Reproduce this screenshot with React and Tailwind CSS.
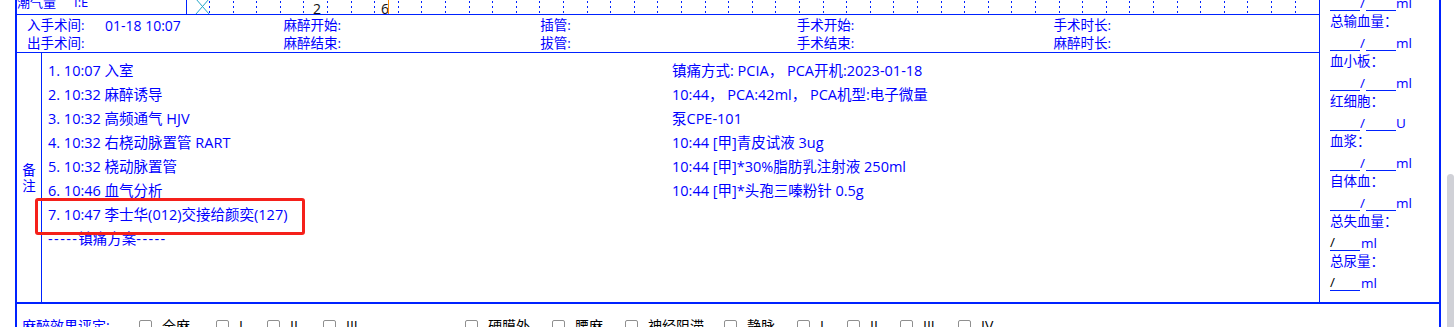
const LINE = 'border-[#0022ff]';

function BloodRow({ unit = 'ml' }) {
  return (
    <div className="flex h-[20px] items-end leading-[16px]">
      <span className="h-full w-[30px] border-b border-[#0022ff]" />
      <span className="w-[6px]">/</span>
      <span className="h-full w-[30px] border-b border-[#0022ff]" />
      <span>{unit}</span>
    </div>
  );
}

function TotalRow() {
  return (
    <div className="flex h-[20px] items-end leading-[16px]">
      <span className="flex h-full w-[30px] items-end border-b border-[#0022ff] text-black">/</span>
      <span className="ml-[1px]">ml</span>
    </div>
  );
}

function Label({ children }) {
  return <div className="flex h-[20px] items-center leading-[16px]">{children}</div>;
}

function Check({ label, w }) {
  return (
    <div className={`flex items-center ${w}`}>
      <span className="mr-[10px] h-[13px] w-[13px] shrink-0 rounded-[2px] border border-[#8f8f8f] bg-white" />
      <span className="text-black">{label}</span>
    </div>
  );
}

export default function App() {
  const ticks = Array.from({ length: 47 }, (_, i) => 22.5 + Math.round(i * 23.6));
  const time = [
    ['入手术间:', '01-18 10:07'],
    ['麻醉开始:', ''],
    ['插管:', ''],
    ['手术开始:', ''],
    ['手术时长:', ''],
    ['出手术间:', ''],
    ['麻醉结束:', ''],
    ['拔管:', ''],
    ['手术结束:', ''],
    ['麻醉时长:', ''],
  ];
  const items = [
    '1. 10:07 入室',
    '2. 10:32 麻醉诱导',
    '3. 10:32 高频通气 HJV',
    '4. 10:32 右桡动脉置管 RART',
    '5. 10:32 桡动脉置管',
    '6. 10:46 血气分析',
    '7. 10:47 李士华(012)交接给颜奕(127)',
  ];
  const pain = [
    '镇痛方式: PCIA， PCA开机:2023-01-18',
    '10:44， PCA:42ml， PCA机型:电子微量',
    '泵CPE-101',
    '10:44 [甲]青皮试液 3ug',
    '10:44 [甲]*30%脂肪乳注射液 250ml',
    '10:44 [甲]*头孢三嗪粉针 0.5g',
  ];
  return (
    <div className="relative h-[327px] w-[1454px] overflow-hidden bg-white font-['Open_Sans','Noto_Sans_CJK_SC',sans-serif] text-[#0000ff]">
      <div className={`-mt-[9px] ml-[15px] w-[1426px] border-x-2 ${LINE}`}>
        <div className="flex">
          <div className="flex w-[1302px] flex-col">
            {/* chart row */}
            <div className={`flex h-[24px] border-b ${LINE}`}>
              <div className={`flex w-[170px] items-center border-r ${LINE} text-[13px] leading-none`}>
                <span>潮气量</span>
                <span className="ml-[18px]">I:E</span>
              </div>
              <svg width="1132" height="23" className="block shrink-0">
                {ticks.map((x) => (
                  <line key={x} x1={x} y1="0" x2={x} y2="23" stroke="#0022ff" strokeWidth="1" strokeDasharray="2 3" />
                ))}
                <line x1="9" y1="8" x2="22" y2="23" stroke="#22a6c8" strokeWidth="1" />
                <line x1="22" y1="8" x2="9" y2="23" stroke="#22a6c8" strokeWidth="1" />
                <text x="126" y="22.5" fontSize="14" fill="#111" fontFamily="Open Sans, sans-serif">2</text>
                <text x="194" y="22.5" fontSize="14" fill="#111" fontFamily="Open Sans, sans-serif">6</text>
                <line x1="201.5" y1="0" x2="201.5" y2="23" stroke="#ff8a00" strokeWidth="1" />
              </svg>
            </div>
            {/* time section */}
            <div className={`grid h-[38px] grid-cols-5 border-b ${LINE} pl-[10px] pr-[9px] pt-[2px] text-[13.5px] leading-[17px]`}>
              {time.map(([l, v]) => (
                <div key={l} className="flex whitespace-nowrap">
                  <span className="w-[78px]">{l}</span>
                  <span className="text-[14px]">{v}</span>
                </div>
              ))}
            </div>
            {/* notes */}
            <div className="flex h-[249px]">
              <div className={`flex w-[25px] items-center justify-center border-r ${LINE} text-[13.5px] leading-[16px]`}>
                <div className="text-center">备<br />注</div>
              </div>
              <div className="flex pl-[6px] pt-[6px] text-[14.5px] leading-[24px]">
                <div className="w-[624px] whitespace-nowrap">
                  {items.map((t) => (
                    <div key={t}>{t}</div>
                  ))}
                  <div>
                    <span className="tracking-[1.4px]">-----</span>镇痛方案<span className="tracking-[1.4px]">-----</span>
                  </div>
                </div>
                <div className="whitespace-nowrap">
                  {pain.map((t) => (
                    <div key={t}>{t}</div>
                  ))}
                </div>
              </div>
            </div>
          </div>
          {/* right column */}
          <div className={`w-[120px] border-l ${LINE} pl-[10px] text-[13.5px]`}>
            <BloodRow />
            <Label>总输血量：</Label>
            <BloodRow />
            <Label>血小板：</Label>
            <BloodRow />
            <Label>红细胞：</Label>
            <BloodRow unit="U" />
            <Label>血浆：</Label>
            <BloodRow />
            <Label>自体血：</Label>
            <BloodRow />
            <Label>总失血量：</Label>
            <TotalRow />
            <Label>总尿量：</Label>
            <TotalRow />
          </div>
        </div>
        {/* bottom row */}
        <div className={`flex h-[40px] items-start border-t-2 ${LINE} pl-[5px] pt-[12px] text-[14px] leading-[20px]`}>
          <span className="w-[117px] whitespace-nowrap">麻醉效果评定:</span>
          <Check label="全麻" w="w-[77px]" />
          <Check label="I" w="w-[51px]" />
          <Check label="II" w="w-[56px]" />
          <Check label="III" w="w-[142px]" />
          <Check label="硬膜外" w="w-[87px]" />
          <Check label="腰麻" w="w-[73px]" />
          <Check label="神经阻滞" w="w-[99px]" />
          <Check label="静脉" w="w-[73px]" />
          <Check label="I" w="w-[50px]" />
          <Check label="II" w="w-[53px]" />
          <Check label="III" w="w-[58px]" />
          <Check label="IV" w="w-[60px]" />
        </div>
      </div>
      {/* annotation box */}
      <div className="absolute left-[35px] top-[198px] h-[37px] w-[270px] rounded-[3px] border-[3px] border-[#f5201a]" />
      {/* scrollbar thumb */}
      <div className="absolute left-[1447px] top-[174px] h-[170px] w-[7px] rounded-[4px] bg-[#d0d1d7]" />
    </div>
  );
}
